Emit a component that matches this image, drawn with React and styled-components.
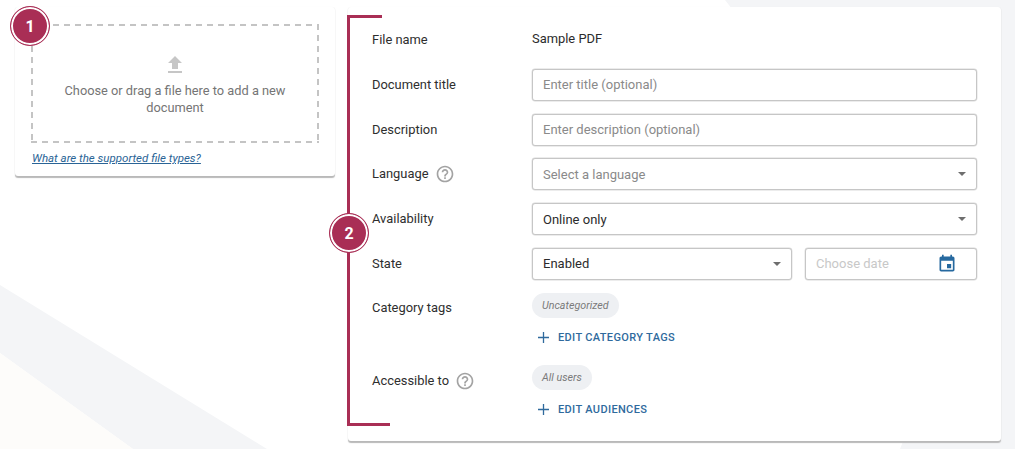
import React from "react";
import styled, { createGlobalStyle } from "styled-components";

const Global = createGlobalStyle`
  html, body { margin: 0; padding: 0; background: #fff; }
  body { font-family: Roboto, "Liberation Sans", sans-serif; color: #2b2b2b; overflow: hidden; }
  * { box-sizing: border-box; }
`;
const Page = styled.div`
  position: relative; width: 1015px; height: 449px; overflow: hidden;
  display: flex; align-items: flex-start; gap: 13px; padding: 7px 14px 0 15px;
`;
const Backdrop = styled.svg`
  position: absolute; inset: 0; width: 1015px; height: 449px;
`;
const Card = styled.section`
  position: relative; background: #fff; border-radius: 3px;
  box-shadow: 0 1.5px 1px #b9b9b9, 0 0 1px rgba(0,0,0,.06);
`;
const UploadCard = styled(Card)`
  width: 320px; height: 169px; padding: 17px 16px 0;
`;
const DropZone = styled.div`
  height: 119px; display: flex; flex-direction: column;
  align-items: center; padding-top: 29px; color: #757575;
  font-size: 12.8px; line-height: 16.5px; text-align: center;
  background-image:
    repeating-linear-gradient(90deg, #c4c4c4 0 6px, transparent 6px 11px),
    repeating-linear-gradient(90deg, #c4c4c4 0 6px, transparent 6px 11px),
    repeating-linear-gradient(180deg, #c4c4c4 0 6px, transparent 6px 11px),
    repeating-linear-gradient(180deg, #c4c4c4 0 6px, transparent 6px 11px);
  background-size: 100% 2px, 100% 2px, 2px 100%, 2px 100%;
  background-position: 0 0, 0 100%, 0 0, 100% 0;
  background-repeat: no-repeat;
`;
const UploadIcon = styled.svg`
  width: 24px; height: 24px; fill: #c6c6c6; margin-bottom: 6px;
`;
const DropText = styled.div` width: 240px; `;
const HelpLink = styled.a`
  display: block; margin: 8px 0 0 1px; font-size: 11.5px; line-height: 15px; font-style: italic;
  color: #2a6496; text-decoration: underline;
`;
const FormCard = styled(Card)`
  width: 653px; height: 434px; padding: 10px 24px 0;
`;
const Rows = styled.div` display: flex; flex-direction: column; `;
const Row = styled.div`
  display: grid; grid-template-columns: 160px 1fr; align-items: ${p => p.$top ? "start" : "center"};
  height: ${p => p.$h}px;
`;
const Label = styled.div`
  display: flex; align-items: center; gap: 6px; font-size: 12.9px; line-height: 16px; color: #2e2e2e;
  padding-top: ${p => p.$pt || 0}px;
`;
const Help = styled.svg` width: 20px; height: 20px; fill: #a3a3a3; `;
const Value = styled.div` font-size: 12.9px; color: #2b2b2b; margin-top: -2px; `;
const Field = styled.div`
  flex: ${p => p.$w ? `0 0 ${p.$w}px` : "1"}; height: 32px; border: 1px solid #c6c6c6; border-radius: 3px;
  box-shadow: 0 0 0 .4px #dadada;
  display: flex; align-items: center; justify-content: space-between; background: #fff;
  padding: 0 ${p => p.$pr || 10}px 0 10px; font-size: 13px;
  color: ${p => p.$tone || "#2b2b2b"};
`;
const FieldGroup = styled.div` display: flex; gap: 13px; `;
const Caret = styled.span`
  width: 0; height: 0; border-left: 4.5px solid transparent; border-right: 4.5px solid transparent;
  border-top: 4.5px solid #6e6e6e;
`;
const CalIcon = styled.svg` width: 20px; height: 20px; fill: #26699f; `;
const TagColumn = styled.div` padding-top: 7px; `;
const Chip = styled.span`
  display: inline-flex; align-items: center; height: 25px; padding: 0 10px; border-radius: 13px;
  background: #eef0f3; color: #7a7a7a; font-size: 10.7px; font-style: italic;
`;
const EditButton = styled.div`
  display: flex; align-items: center; gap: 9px; margin: 10px 0 0 6px; height: 18px;
  color: #2f6a9d; font-size: 11px; font-weight: 500; letter-spacing: .35px;
`;
const Plus = styled.svg` width: 11px; height: 11px; stroke: #2f6a9d; stroke-width: 1.3; fill: none; `;
const Bracket = styled.div`
  position: absolute; left: 347px; top: 15px; width: ${p => p.$w}px; height: 411px;
  border-left: 3px solid #a92e55; border-top: 3px solid #a92e55;
`;
const BracketEnd = styled.div`
  position: absolute; left: 347px; top: 423px; width: 43px; height: 3px; background: #a92e55;
`;
const Badge = styled.div`
  position: absolute; left: ${p => p.$x - 20}px; top: ${p => p.$y - 20}px; width: 40px; height: 40px;
  border-radius: 50%; background: #a92e55; border: 1.5px solid #a92e55;
  box-shadow: inset 0 0 0 2px #fff;
  display: flex; align-items: center; justify-content: center;
  color: #fff; font-size: 16px; font-weight: 700;
`;

const HelpIcon = () => (
  <Help viewBox="0 0 24 24"><path d="M11 18h2v-2h-2v2zm1-16C6.48 2 2 6.48 2 12s4.48 10 10 10 10-4.48 10-10S17.52 2 12 2zm0 18c-4.41 0-8-3.59-8-8s3.59-8 8-8 8 3.59 8 8-3.59 8-8 8zm0-14c-2.21 0-4 1.79-4 4h2c0-1.1.9-2 2-2s2 .9 2 2c0 2-3 1.75-3 5h2c0-2.25 3-2.5 3-5 0-2.21-1.79-4-4-4z" /></Help>
);
const PlusIcon = () => (
  <Plus viewBox="0 0 11 11"><path d="M5.5 0v11M0 5.5h11" /></Plus>
);

export default function App() {
  return (
    <>
      <Global />
      <Page>
        <Backdrop viewBox="0 0 1015 449">
          <polygon points="725,0 1015,0 1015,449 900,449 960,300" fill="#f4f5f7" />
          <polygon points="0,285 267,449 133,449 0,353" fill="#f4f5f7" />
          <polygon points="0,353 133,449 0,449" fill="#fdfcfa" />
        </Backdrop>
        <UploadCard>
          <DropZone>
            <UploadIcon viewBox="0 0 24 24"><path d="M9 16h6v-6h4l-7-7-7 7h4zm-4 2h14v2H5z" /></UploadIcon>
            <DropText>Choose or drag a file here to add a new document</DropText>
          </DropZone>
          <HelpLink>What are the supported file types?</HelpLink>
        </UploadCard>
        <FormCard>
          <Rows>
            <Row $h={45.6}><Label>File name</Label><Value>Sample PDF</Value></Row>
            <Row $h={44.7}><Label>Document title</Label><Field $tone="#8a8a8a">Enter title (optional)</Field></Row>
            <Row $h={44.7}><Label>Description</Label><Field $tone="#8a8a8a">Enter description (optional)</Field></Row>
            <Row $h={44.7}><Label>Language<HelpIcon /></Label><Field $tone="#8a8a8a">Select a language<Caret /></Field></Row>
            <Row $h={44.7}><Label>Availability</Label><Field>Online only<Caret /></Field></Row>
            <Row $h={44.7}>
              <Label>State</Label>
              <FieldGroup>
                <Field $w={260}>Enabled<Caret /></Field>
                <Field $tone="#c8c8c8" $pr={19}>Choose date<CalIcon viewBox="0 0 24 24"><path d="M17 12h-5v5h5v-5zM16 1v2H8V1H6v2H5c-1.11 0-1.99.9-1.99 2L3 19c0 1.1.89 2 2 2h14c1.1 0 2-.9 2-2V5c0-1.1-.9-2-2-2h-1V1h-2zm3 18H5V8h14v11z" /></CalIcon></Field>
              </FieldGroup>
            </Row>
            <Row $h={72} $top>
              <Label $pt={14}>Category tags</Label>
              <TagColumn>
                <Chip>Uncategorized</Chip>
                <EditButton><PlusIcon />EDIT CATEGORY TAGS</EditButton>
              </TagColumn>
            </Row>
            <Row $h={72} $top>
              <Label $pt={13}>Accessible to<HelpIcon /></Label>
              <TagColumn>
                <Chip>All users</Chip>
                <EditButton><PlusIcon />EDIT AUDIENCES</EditButton>
              </TagColumn>
            </Row>
          </Rows>
        </FormCard>
        <Bracket $w={35} />
        <BracketEnd />
        <Badge $x={30} $y={26}>1</Badge>
        <Badge $x={349} $y={233}>2</Badge>
      </Page>
    </>
  );
}
